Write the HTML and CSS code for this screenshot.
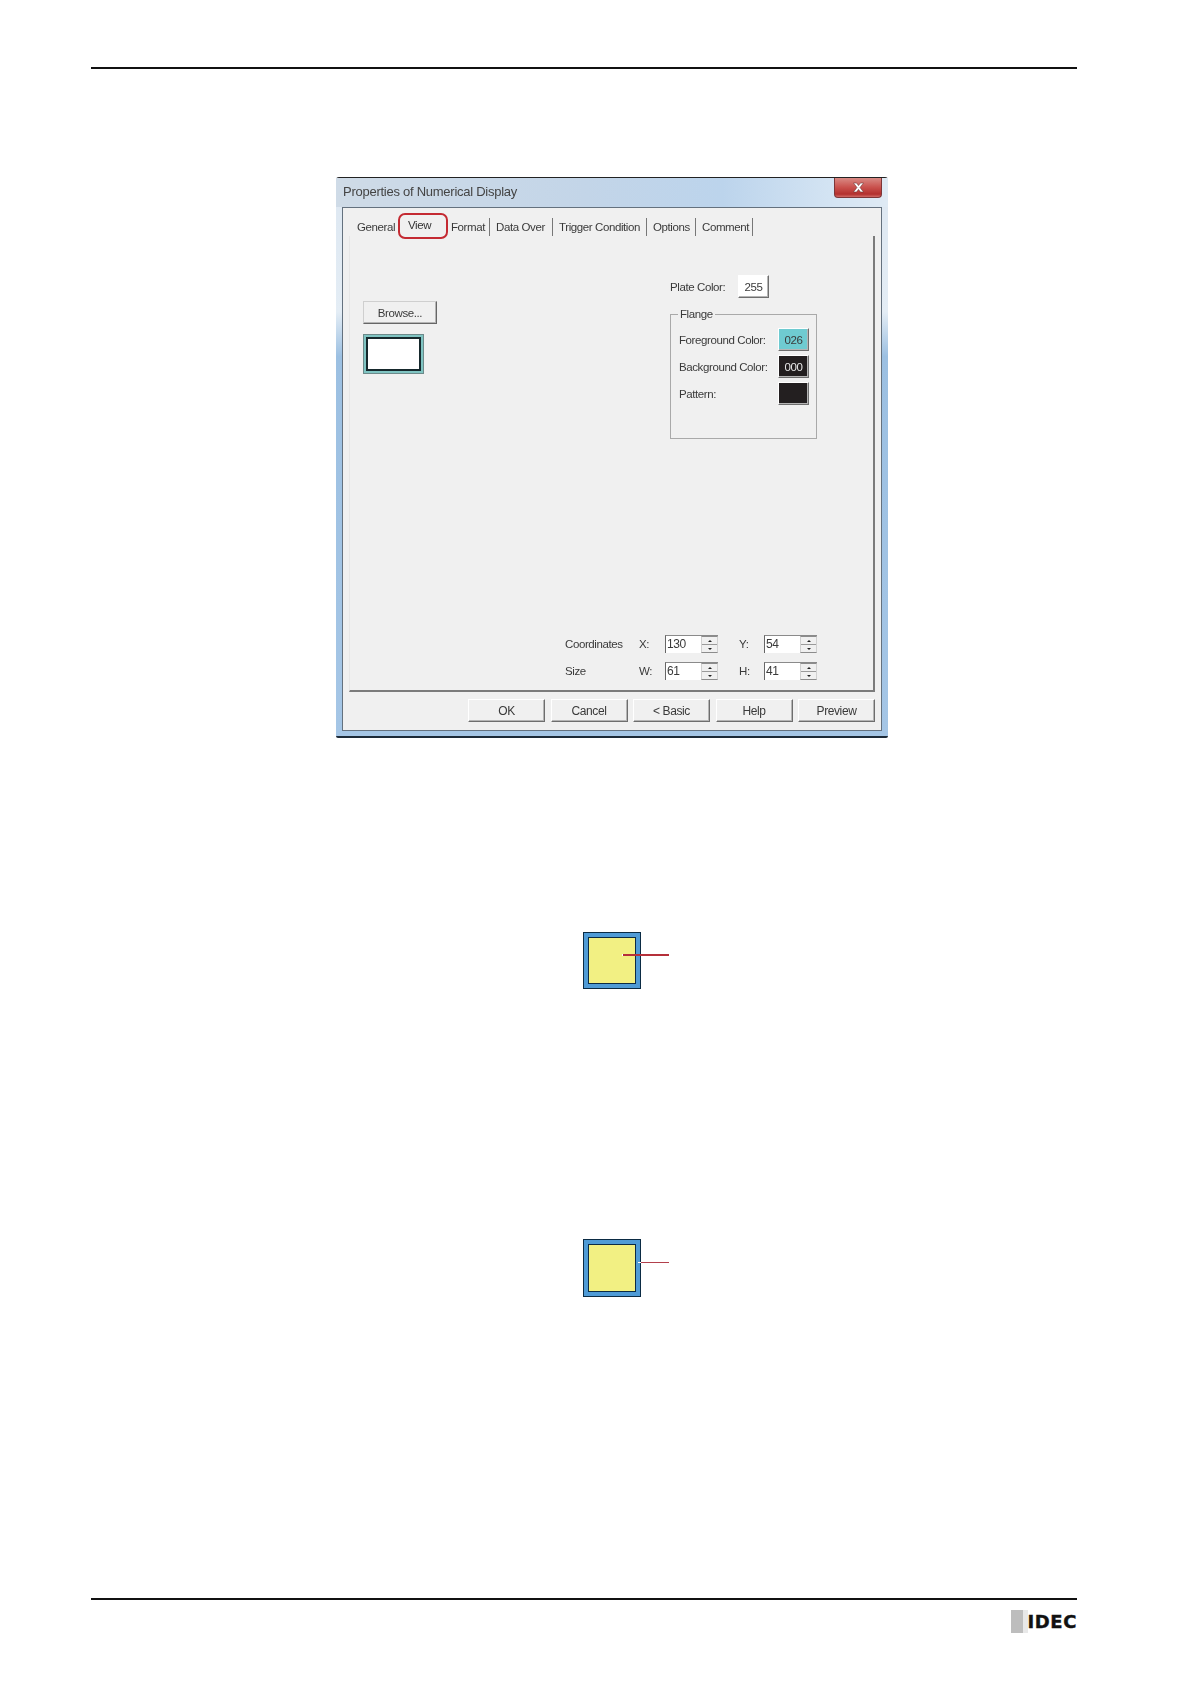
FILE: index.html
```html
<!DOCTYPE html>
<html lang="en">
<head>
<meta charset="utf-8">
<title>Properties of Numerical Display</title>
<link rel="stylesheet" href="styles.css">
</head>
<body>
<div class="page">
  <div class="rule"></div>

  <section class="dialog">
    <header class="titlebar">
      <span class="title">Properties of Numerical Display</span>
      <span class="close">
        <svg width="13" height="11" viewBox="0 0 13 11"><path d="M1.5 1h3l2 2.6L8.500 1h3L8 5.500 11.500 10h-3l-2-2.600L4.500 10h-3L5 5.500z" fill="#fff" stroke="#5a2a2a" stroke-width=".5"/></svg>
      </span>
    </header>
    <div class="panel">
      <nav class="tabs">
        <span class="tab tab-general">General</span>
        <span class="tab tab-view">View</span>
        <span class="tab tab-format">Format</span>
        <span class="tab tab-data">Data Over</span>
        <span class="tab tab-trigger">Trigger Condition</span>
        <span class="tab tab-options">Options</span>
        <span class="tab tab-comment">Comment</span>
      </nav>
      <div class="tabpage">
        <div class="upper">
          <div class="left-col">
            <button class="btn browse">Browse...</button>
            <div class="preview"><div class="preview-inner"></div></div>
          </div>
          <div class="right-col">
            <div class="plate-row">
              <span>Plate Color:</span>
              <button class="btn swatch plate">255</button>
            </div>
            <fieldset class="group">
              <legend>Flange</legend>
              <div class="color-row"><span>Foreground Color:</span><button class="btn swatch fg">026</button></div>
              <div class="color-row"><span>Background Color:</span><button class="btn swatch bg">000</button></div>
              <div class="color-row"><span>Pattern:</span><button class="btn swatch pattern"></button></div>
            </fieldset>
          </div>
        </div>
        <div class="coords">
          <span>Coordinates</span><span>X:</span>
          <div class="field"><span class="value">130</span><span class="spin"><i class="up"></i><i class="down"></i></span></div>
          <span class="ylabel">Y:</span>
          <div class="field"><span class="value">54</span><span class="spin"><i class="up"></i><i class="down"></i></span></div>
          <span>Size</span><span>W:</span>
          <div class="field"><span class="value">61</span><span class="spin"><i class="up"></i><i class="down"></i></span></div>
          <span class="ylabel">H:</span>
          <div class="field"><span class="value">41</span><span class="spin"><i class="up"></i><i class="down"></i></span></div>
        </div>
      </div>
      <footer class="actions">
        <button class="btn action">OK</button>
        <button class="btn action">Cancel</button>
        <button class="btn action">&lt; Basic</button>
        <button class="btn action">Help</button>
        <button class="btn action">Preview</button>
      </footer>
    </div>
  </section>

  <div class="figure figure-one">
    <div class="plate"><div class="plate-face"></div></div>
    <span class="leader leader-thick"></span>
  </div>

  <div class="figure figure-two">
    <div class="plate"><div class="plate-face"></div></div>
    <span class="leader leader-thin"></span>
  </div>

  <div class="rule rule-bottom"></div>
  <div class="logo"><span class="logo-mark"></span><span class="logo-text">IDEC</span></div>
</div>
</body>
</html>
```

FILE: styles.css
```css
* { box-sizing: border-box; }
html, body { margin: 0; background: #fff; }
.page { width: 986px; margin-left: 91px; padding-top: 67px; height: 1684px; overflow: hidden; }
.rule { height: 2px; background: #111; }
.rule-bottom { margin-top: 301px; }

/* dialog window */
.dialog {
  width: 552px; height: 561px; margin: 108px 0 0 245px;
  border-top: 1px solid #222; border-radius: 3px 3px 2px 2px;
  border-bottom: 2px solid #1c2a38;
  background: linear-gradient(180deg, #dde7f1 0, #e4edf5 24%, #9cc0e2 32%, #a5c6e6 100%);
  font: 11.500px "Liberation Sans", Arial, sans-serif;
  letter-spacing: -.4px; color: #3a3a3a;
  padding: 0 6px 5px;
  display: flex; flex-direction: column;
  filter: blur(.35px);
}
.titlebar {
  height: 29px; margin: 0 -6px; padding: 0 6px 0 7px;
  display: flex; justify-content: space-between; align-items: flex-start;
  background: linear-gradient(90deg, #cfdbe7, #c3d5e8 45%, #bcd4ec 70%, #d4e4f3 90%, #dfeaf4);
}
.title { font-size: 13px; letter-spacing: -.26px; line-height: 28px; color: #444; }
.close {
  width: 48px; height: 20px; border-radius: 0 0 4px 4px;
  border: 1px solid #7d3638; border-top: 0;
  background: linear-gradient(180deg, #d98a84, #c9504c 50%, #b3302e 85%, #d06a66);
  display: flex; align-items: center; justify-content: center;
}
.panel {
  flex: 1; display: flex; flex-direction: column;
  background: #f0f0f0; border: 1px solid #64717e; padding: 0 6px 0 6px;
}

/* tabs */
.tabs { height: 28px; display: flex; align-items: flex-end; padding-left: 8px; flex: none; }
.tab { height: 18px; line-height: 18px; border-right: 1px solid #777; padding: 0 6px; white-space: nowrap; }
.tab-general { width: 41px; border-right: 0; padding: 0; }
.tab-view {
  width: 50px; height: 26px; margin: 0 2px -3px 0; padding: 1px 0 0 8px;
  border: 2px solid #c42a32; border-radius: 7px; position: relative; color: #333;
}
.tab-format { width: 40px; padding-left: 1px; }
.tab-data { width: 63px; }
.tab-trigger { width: 94px; }
.tab-options { width: 49px; }
.tab-comment { width: 57px; }

.tabpage {
  flex: 1; display: flex; flex-direction: column;
  border-left: 1px solid #e6e6e6; border-right: 2px solid #7b7b7b; border-bottom: 2px solid #7b7b7b;
  padding-right: 56px;
}
.upper { display: flex; justify-content: space-between; }
.left-col { margin: 65px 0 0 13px; }
.right-col { width: 147px; margin-top: 39px; }

/* buttons */
.btn {
  font: inherit; letter-spacing: inherit; color: inherit; padding: 0; display: block;
  background: #f0f0f0;
  border: 1px solid; border-color: #fff #6e6e6e #6e6e6e #fff;
  box-shadow: inset -1px -1px 0 #b5b5b5;
}
.browse { width: 74px; height: 23px; border-color: #cfcfcf #666 #666 #cfcfcf; }
.preview {
  width: 61px; height: 40px; margin-top: 10px; padding: 2px;
  background: #7fc4c2; border: 1px solid #6d8a8a;
}
.preview-inner { height: 100%; background: #fff; border: 2px solid #16282c; }

.plate-row { display: flex; align-items: center; height: 23px; }
.plate-row span { width: 68px; }
.swatch { width: 31px; height: 23px; }
.plate { background: #fff; }
.group {
  margin: 10px 0 0; padding: 0 7px 0 8px; height: 131px; min-width: 0;
  border: 1px solid #a9a9a9; background: transparent;
}
.group legend { padding: 0 2px; margin-left: -1px; line-height: 13px; margin-bottom: 7px; }
.color-row { display: flex; justify-content: space-between; align-items: center; height: 23px; margin-bottom: 4px; }
.fg { background: #6fcbd1; }
.bg { background: #231f20; color: #e8e8e8; }
.pattern { background: #231f20; }

/* coordinates */
.coords {
  margin-top: auto; margin-bottom: 10px; align-self: flex-end;
  display: grid; grid-template-columns: 74px 26px 53px 46px 53px;
  row-gap: 9px; align-items: center;
}
.ylabel { margin-left: 21px; }
.field {
  height: 18px; display: flex; background: #fff;
  border-left: 1px solid #666; border-top: 1px solid #8a8a8a;
}
.value { flex: 1; padding-left: 1px; line-height: 17px; font-size: 12px; }
.spin {
  width: 17px; display: flex; flex-direction: column;
  border: 1px solid #8c8c8c; border-left-color: #d0d0d0; border-right-color: #d0d0d0; background: #f0f0f0;
}
.spin i { flex: 1; display: flex; align-items: center; justify-content: center; }
.spin .up { border-bottom: 1px solid #9a9a9a; }
.spin i::before { content: ""; border-left: 2px solid transparent; border-right: 2px solid transparent; }
.spin .up::before { border-bottom: 2px solid #222; }
.spin .down::before { border-top: 2px solid #222; }

/* action buttons */
.actions { flex: none; display: flex; justify-content: flex-end; gap: 5.500px; padding: 7px 0 8px; }
.action { width: 77px; height: 23px; font-size: 12px; }

/* figures */
.figure { position: relative; width: 58px; margin-left: 492px; }
.figure-one { margin-top: 194px; }
.figure-two { margin-top: 250px; }
.figure .plate {
  display: block; width: 58px; height: 57px; padding: 4px;
  background: #4f9bd6; border: 1.500px solid #0b2b44;
}
.figure-two .plate { height: 58px; }
.plate-face { height: 100%; background: #f2f083; border: 1px solid #0b2b44; }
.leader { position: absolute; display: block; }
.leader-thick { left: 40px; top: 22px; width: 46px; height: 2px; background: #b5303a; box-shadow: -1px 0 0 #fff; }
.leader-thin { left: 55px; top: 23px; width: 31px; height: 1px; background: #b2404c; border-left: 3px solid #fff; }

/* logo */
.logo { display: flex; justify-content: flex-end; align-items: center; margin-top: 10px; height: 23px; }
.logo-mark { width: 17px; height: 23px; background: linear-gradient(90deg, #bdbdbd 72%, #e8e8e8 72%); margin-right: -1px; }
.logo-text { font: bold 18px "DejaVu Sans", sans-serif; letter-spacing: .6px; color: #111; line-height: 23px; -webkit-text-stroke: .4px #111; }
```
